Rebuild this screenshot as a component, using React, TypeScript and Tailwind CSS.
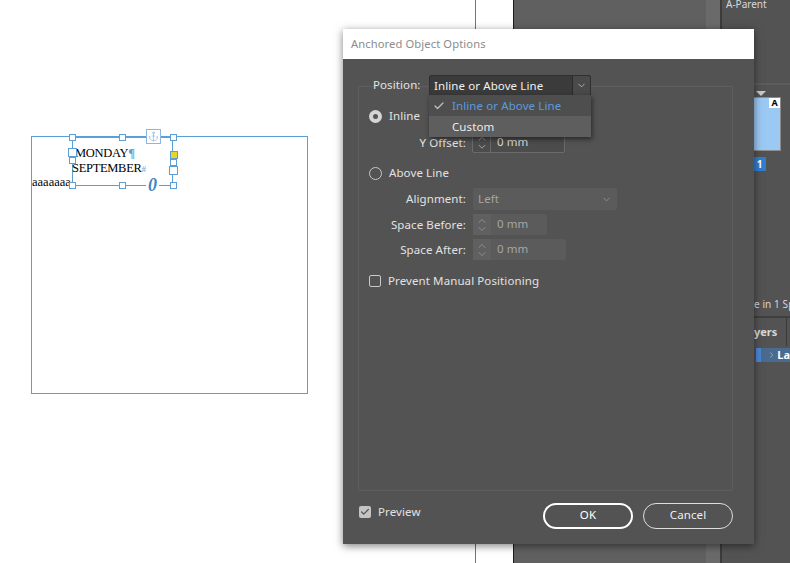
import { Check, ChevronDown, ChevronUp, ChevronRight, Anchor } from "lucide-react"

const uiFont = { fontFamily: '"Noto Sans", sans-serif' }

function Handle({ className }: { className: string }) {
  return <div className={`absolute w-[7px] h-[7px] bg-white border border-[#5b9fd6] ${className}`} />
}

function Stepper({ width, value, dim }: { width: string; value: string; dim?: boolean }) {
  return (
    <div className={`flex h-[21px] rounded-[2px] ${width} ${dim ? "bg-[#5b5b5b]" : "bg-[#4c4c4c] border border-[#6b6b6b]"}`}>
      <div className={`flex flex-col items-center justify-center w-[18px] shrink-0 ${dim ? "text-[#a8a8a8] bg-[#606060]" : "text-[#d4d4d4] border-r border-[#6b6b6b]"}`}>
        <ChevronUp size={12} strokeWidth={1.3} className="-mb-[2px]" />
        <ChevronDown size={12} strokeWidth={1.3} className="-mt-[2px]" />
      </div>
      <span className={`pl-[6px] ${dim ? "leading-[20px] text-[#a5a5a5]" : "leading-[18px] text-[#dcdcdc]"}`}>{value}</span>
    </div>
  )
}

function Dialog() {
  return (
    <div
      style={uiFont}
      className="absolute left-[343px] top-[29px] w-[411px] h-[515px] flex flex-col bg-[#535353] text-[11.5px] text-[#e2e2e2] tracking-[0.1px] shadow-[0_2px_8px_rgba(0,0,0,0.5)]"
    >
      <div className="h-[30px] shrink-0 bg-white pl-[8px] leading-[30px] text-[11.2px] text-[#8c8c8c]">
        Anchored Object Options
      </div>

      <div className="relative flex-1 flex flex-col pl-[16px] pr-[21px]">
        {/* position select */}
        <div className="flex items-center h-[20px] mt-[16px] pl-[14px] relative z-20">
          <span className="w-[56px] shrink-0">Position:</span>
          <div className="flex w-[162px] h-[21px] rounded-[2px] border border-[#2f2f2f] bg-[#3b3b3b] text-[#f0f0f0]">
            <span className="flex-1 pl-[4px] leading-[19px] border-r border-[#2b2b2b]">Inline or Above Line</span>
            <div className="w-[17px] flex items-center justify-center bg-[#4a4a4a] rounded-r-[2px]">
              <ChevronDown size={11} strokeWidth={1.5} className="text-[#d8d8d8]" />
            </div>
          </div>
        </div>

        {/* dropdown menu */}
        <div className="absolute z-30 left-[86px] top-[36px] w-[162px] h-[42px] flex flex-col shadow-[1px_2px_5px_rgba(0,0,0,0.55)]">
          <div className="h-[21px] flex items-center bg-[#4e4e4e] text-[#5b9bdd]">
            <Check size={12} strokeWidth={2.5} className="ml-[4px] mr-[7px] text-[#c0c0c0]" />
            <span>Inline or Above Line</span>
          </div>
          <div className="h-[21px] flex items-center bg-[#5e5e5e] text-[#ececec] pl-[23px]">Custom</div>
        </div>

        {/* options group */}
        <div className="flex-1 flex flex-col -mt-[9px] mb-[12px] border border-[#5e5e5e] rounded-[1px] ml-[-1px] pl-[10px]">
          <div className="flex items-center mt-[19px] h-[20px]">
            <span className="w-[13px] h-[13px] rounded-full bg-[#d5d5d5] flex items-center justify-center mr-[7px]">
              <span className="w-[5px] h-[5px] rounded-full bg-[#555555]" />
            </span>
            <span>Inline</span>
          </div>
          <div className="flex items-center mt-[6px] h-[21px]">
            <span className="w-[103px] text-right pr-[6px] shrink-0">Y Offset:</span>
            <Stepper width="w-[93px]" value="0 mm" />
          </div>
          <div className="flex items-center mt-[10px] h-[20px]">
            <span className="w-[13px] h-[13px] rounded-full border border-[#c8c8c8] mr-[7px]" />
            <span>Above Line</span>
          </div>
          <div className="flex items-center mt-[5px] h-[22px]">
            <span className="w-[104px] text-right pr-[7px] shrink-0">Alignment:</span>
            <div className="flex items-center justify-between w-[144px] h-[22px] rounded-[2px] bg-[#5b5b5b] text-[#a5a5a5] pl-[5px] pr-[5px]">
              Left
              <ChevronDown size={11} strokeWidth={1.4} className="text-[#a8a8a8]" />
            </div>
          </div>
          <div className="flex items-center mt-[4px] h-[21px]">
            <span className="w-[104px] text-right pr-[7px] shrink-0">Space Before:</span>
            <Stepper width="w-[74px]" value="0 mm" dim />
          </div>
          <div className="flex items-center mt-[4px] h-[21px]">
            <span className="w-[104px] text-right pr-[7px] shrink-0">Space After:</span>
            <Stepper width="w-[93px]" value="0 mm" dim />
          </div>
          <div className="flex items-center mt-[11px] h-[20px]">
            <span className="w-[12px] h-[12px] rounded-[2px] border border-[#c8c8c8] mr-[7px]" />
            <span>Prevent Manual Positioning</span>
          </div>
        </div>

        {/* footer */}
        <div className="flex items-center h-[26px] mb-[15px]">
          <span className="w-[12px] h-[12px] rounded-[2px] bg-[#c4c4c4] flex items-center justify-center mr-[7px] -mt-[8px]">
            <Check size={10} strokeWidth={3} className="text-[#555555]" />
          </span>
          <span className="-mt-[8px]">Preview</span>
          <div className="ml-auto flex gap-[10px]">
            <div className="w-[90px] h-[26px] rounded-full border-2 border-white flex items-center justify-center pb-[2px] text-white">OK</div>
            <div className="w-[90px] h-[26px] rounded-full border border-[#dedede] flex items-center justify-center pb-[2px] text-[#efefef]">Cancel</div>
          </div>
        </div>
      </div>
    </div>
  )
}

function TextFrame() {
  return (
    <div className="absolute left-[31px] top-[136px] w-[277px] h-[258px] border border-[#5b9fd6]">
      <div className="absolute left-[40px] top-0 w-[101px] h-[49px] border border-[#5b9fd6]" />
      <div className="absolute left-[40px] top-[9px] text-[12.5px] leading-[15px] text-black tracking-[-0.3px]" style={{ fontFamily: '"Liberation Serif", serif' }}>
        <div className="pl-[3px]">MONDAY<span className="text-[#5b9fd6] font-bold">¶</span></div>
        <div>SEPTEMBER<span className="text-[#7fb2de] text-[9px] font-bold">#</span></div>
      </div>
      <div className="absolute left-0 top-[38px] text-[12.5px] leading-[14px] text-black" style={{ fontFamily: '"Liberation Serif", serif' }}>aaaaaaa</div>
      <Handle className="left-[37px] -top-[3px]" />
      <Handle className="left-[87px] -top-[3px]" />
      <Handle className="left-[138px] -top-[3px]" />
      <div className="absolute left-[114px] -top-[8px] w-[15px] h-[15px] bg-white border border-[#8ab8e0] flex items-center justify-center">
        <Anchor size={11} strokeWidth={1.5} className="text-[#8ab8e0]" />
      </div>
      <div className="absolute left-[36px] top-[11px] w-[9px] h-[9px] bg-white border border-[#5b9fd6]" />
      <Handle className="left-[37px] top-[20px]" />
      <div className="absolute left-[138px] top-[14px] w-[8px] h-[8px] bg-[#e8d428] border border-[#5b9fd6]" />
      <Handle className="left-[138px] top-[22px]" />
      <div className="absolute left-[137px] top-[29px] w-[9px] h-[9px] bg-white border border-[#5b9fd6]" />
      <Handle className="left-[37px] top-[45px]" />
      <Handle className="left-[87px] top-[45px]" />
      <Handle className="left-[138px] top-[45px]" />
      <div className="absolute left-[114px] top-[39px] text-[18px] leading-[18px] font-bold italic text-[#3f86c8] bg-white px-[2px]" style={{ fontFamily: '"Liberation Serif", serif' }}>0</div>
    </div>
  )
}

function RightPanel() {
  return (
    <div style={uiFont} className="absolute left-[722px] top-0 w-[68px] h-[563px] bg-[#535353] text-[10px] text-[#d8d8d8] overflow-hidden">
      <div className="h-[85px] border-b-2 border-[#5c5c5c] pl-[4px] leading-[8px]">A-Parent</div>
      <div className="absolute left-[34px] top-[91px] w-0 h-0 border-l-[5px] border-r-[5px] border-t-[5px] border-l-transparent border-r-transparent border-t-[#c9c9c9]" />
      <div className="absolute left-[31px] top-[97px] w-[28px] h-[54px] bg-[#9cc8f4] border border-[#8c8c8c]">
        <div className="absolute right-0 top-0 w-[11px] h-[10px] bg-white text-black text-[9px] leading-[10px] font-bold text-center">A</div>
      </div>
      <div className="absolute left-[31px] top-[157px] w-[13px] h-[14px] bg-[#2f7ed0] text-white font-bold text-center leading-[14px]">1</div>
      <div className="absolute left-[32px] top-[296px] whitespace-nowrap leading-[16px] tracking-[0.1px]">e in 1 Sp</div>
      <div className="absolute left-0 top-[316px] w-full border-t-2 border-[#3f3f3f]" />
      <div className="absolute left-[32px] top-[318px] w-[33px] h-[28px] bg-[#535353] border-r border-[#3a3a3a] text-[11px] font-bold leading-[28px]">yers</div>
      <div className="absolute left-[34px] top-[348px] w-[5px] h-[14px] bg-[#4a86d4]" />
      <div className="absolute left-[39px] top-[348px] w-[29px] h-[14px] bg-[#4a6a8f] flex items-center text-white font-bold text-[11px] whitespace-nowrap">
        <ChevronRight size={10} className="ml-[6px] mr-[1px] text-[#a8b8c8]" />
        La
      </div>
    </div>
  )
}

export default function App() {
  return (
    <div className="relative w-[790px] h-[563px] overflow-hidden bg-white">
      {/* spread guide */}
      <div className="absolute left-[475px] top-0 w-px h-full bg-[#9b4fc8]" />
      <div className="absolute left-[513px] top-0 w-px h-full bg-[#1c1c1c]" />
      <div className="absolute left-[514px] top-0 w-[192px] h-full bg-[#606060]" />
      <div className="absolute left-[706px] top-0 w-[14px] h-full bg-[#6a6a6a]" />
      <div className="absolute left-[720px] top-0 w-[2px] h-full bg-[#3c3c3c]" />
      <TextFrame />
      <RightPanel />
      <Dialog />
    </div>
  )
}
